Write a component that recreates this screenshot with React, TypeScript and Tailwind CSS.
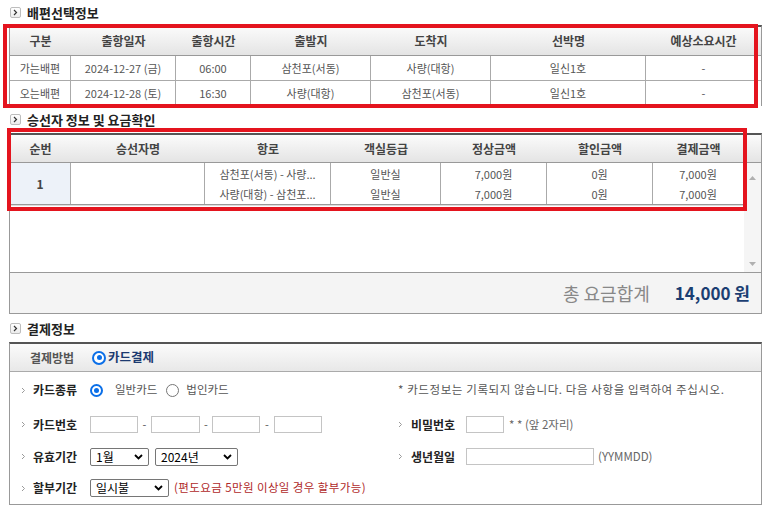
import React from "react";

function Title({ text, h }: { text: string; h: string }) {
  return (
    <div className={`flex items-center pl-[10px] gap-[6px] ${h}`}>
      <span className="w-[11px] h-[11px] border border-[#bdbdbd] rounded-[2px] bg-linear-to-b from-white to-[#ececec] flex items-center justify-center">
        <svg width="5" height="7" viewBox="0 0 5 7">
          <path d="M1 1l2.5 2.5L1 6" stroke="#333" strokeWidth="1.2" fill="none" />
        </svg>
      </span>
      <span className="text-[13px] font-bold text-[#222] leading-none">{text}</span>
    </div>
  );
}

function Bullet() {
  return (
    <svg width="5" height="7" viewBox="0 0 5 7" className="shrink-0">
      <path d="M1 1l2.5 2.5L1 6" stroke="#9a9a9a" strokeWidth="1" fill="none" />
    </svg>
  );
}

function RadioOn({ size = "w-[13px] h-[13px]" }: { size?: string }) {
  return (
    <span className={`${size} rounded-full border-[2px] border-[#0b6fe8] bg-white flex items-center justify-center shrink-0`}>
      <span className="w-[5px] h-[5px] rounded-full bg-[#0b6fe8]" />
    </span>
  );
}

function RadioOff() {
  return <span className="block w-[13px] h-[13px] rounded-full border border-[#767676] bg-white shrink-0" />;
}

function Select({ w, text }: { w: string; text: string }) {
  return (
    <div className={`${w} h-[18px] border border-[#767676] rounded-[2px] bg-white flex items-center justify-between pl-[5px] pr-[5px] text-[12px] text-black`}>
      <span className="leading-none">{text}</span>
      <svg width="9" height="6" viewBox="0 0 9 6">
        <path d="M1 1l3.5 3.5L8 1" stroke="#000" strokeWidth="1.8" fill="none" />
      </svg>
    </div>
  );
}

function Input({ w }: { w: string }) {
  return <div className={`${w} h-[17px] border border-[#c4c4c4] bg-white`} />;
}

const t1Cols = ["w-[61px]", "w-[105px]", "w-[75px]", "w-[120px]", "w-[120px]", "w-[155px]", "w-[115px]"];
const t1Head = ["구분", "출항일자", "출항시간", "출발지", "도착지", "선박명", "예상소요시간"];
const t1Rows = [
  ["가는배편", "2024-12-27 (금)", "06:00", "삼천포(서동)", "사량(대항)", "일신1호", "-"],
  ["오는배편", "2024-12-28 (토)", "16:30", "사량(대항)", "삼천포(서동)", "일신1호", "-"],
];

const t2Cols = ["w-[61px]", "w-[134px]", "w-[126px]", "w-[110px]", "w-[106px]", "w-[106px]", "w-[91px]"];
const t2Head = ["순번", "승선자명", "항로", "객실등급", "정상금액", "할인금액", "결제금액"];

export default function App() {
  return (
    <div className="relative w-[770px] h-[513px] bg-white overflow-hidden font-['Noto_Sans_CJK_KR',sans-serif] text-[#555]">
      <Title text="배편선택정보" h="h-[25px]" />
      {/* Section 1 */}
      <div className="ml-[9px] w-[753px] border-x border-[#999] border-t-2 border-t-[#555]">
        <div className="flex h-[29px] bg-linear-to-b from-[#fbfbfb] to-[#e4e4e4] border-b border-[#999]">
          {t1Head.map((h, i) => (
            <div key={i} className={`${t1Cols[i]} flex items-center justify-center text-[12px] font-bold text-[#444]`}>
              {h}
            </div>
          ))}
        </div>
        {t1Rows.map((r, ri) => (
          <div key={ri} className={`flex h-[25px] ${ri === 0 ? "border-b border-[#aaa]" : ""}`}>
            {r.map((c, i) => (
              <div
                key={i}
                className={`${t1Cols[i]} flex items-center justify-center text-[11px] text-[#555] ${i < 6 ? "border-r border-[#aaa]" : ""}`}
              >
                {c}
              </div>
            ))}
          </div>
        ))}
      </div>

      <Title text="승선자 정보 및 요금확인" h="h-[27px]" />
      {/* Section 2 */}
      <div className="ml-[9px] w-[753px] border-x border-[#999] border-t-2 border-t-[#555]">
        <div className="flex h-[28px] bg-linear-to-b from-[#fbfbfb] to-[#e4e4e4] border-b border-[#999]">
          {t2Head.map((h, i) => (
            <div key={i} className={`${t2Cols[i]} flex items-center justify-center text-[12px] font-bold text-[#444]`}>
              {h}
            </div>
          ))}
        </div>
        <div className="flex h-[109px]">
          <div className="w-[734px] flex flex-col">
            <div className="flex h-[42px] border-b border-[#999] shadow-[0_1px_0_#dcdcdc]">
              <div className="w-[61px] border-r border-[#aaa] bg-[#edf2f9] flex items-center justify-center text-[12px] font-bold text-[#444]">
                1
              </div>
              <div className="w-[134px] border-r border-[#aaa]" />
              <div className="w-[126px] border-r border-[#aaa] flex flex-col items-center justify-center text-[11px] leading-[20px]">
                <span>삼천포(서동) - 사량...</span>
                <span>사량(대항) - 삼천포...</span>
              </div>
              {[
                ["일반실", "일반실"],
                ["7,000원", "7,000원"],
                ["0원", "0원"],
                ["7,000원", "7,000원"],
              ].map((pair, i) => (
                <div
                  key={i}
                  className={`${t2Cols[i + 3]} border-r border-[#aaa] flex flex-col items-center justify-center text-[11px] leading-[20px]`}
                >
                  <span>{pair[0]}</span>
                  <span>{pair[1]}</span>
                </div>
              ))}
            </div>
          </div>
          <div className="w-[17px] bg-[#f5f5f5] flex flex-col items-center justify-between pt-[13px] pb-[6px]">
            <svg width="7" height="4" viewBox="0 0 7 4">
              <path d="M0 4L3.5 0L7 4Z" fill="#b0b0b0" />
            </svg>
            <svg width="7" height="4" viewBox="0 0 7 4">
              <path d="M0 0L3.5 4L7 0Z" fill="#b0b0b0" />
            </svg>
          </div>
        </div>
        <div className="flex h-[42px] items-center justify-end pr-[11px] bg-[#f4f4f4] border-y border-[#999]">
          <span className="text-[18px] text-[#888] mr-[25px]">총 요금합계</span>
          <span className="text-[17px] font-bold text-[#1b3e72]">14,000 원</span>
        </div>
      </div>

      <Title text="결제정보" h="h-[28px]" />
      {/* Section 3 */}
      <div className="ml-[9px] w-[753px] border-x border-b border-[#999] border-t-2 border-t-[#555]">
        <div className="flex items-center h-[28px] pl-[20px] bg-linear-to-b from-[#fbfbfb] to-[#e8e8e8] border-b border-[#aaa]">
          <span className="text-[12px] font-bold text-[#555] w-[62px]">결제방법</span>
          <RadioOn size="w-[14px] h-[14px]" />
          <span className="ml-[2px] text-[12.5px] font-bold text-[#1c3a70]">카드결제</span>
        </div>
        <div className="flex flex-col">
          <div className="flex h-[36px] items-center">
            <div className="w-[388px] flex items-center pl-[11px]">
              <Bullet />
              <span className="ml-[7px] w-[57px] text-[12px] font-bold text-[#222]">카드종류</span>
              <RadioOn />
              <span className="ml-[12px] text-[11.5px] text-[#555]">일반카드</span>
              <span className="ml-[9px]">
                <RadioOff />
              </span>
              <span className="ml-[7px] text-[11.5px] text-[#555]">법인카드</span>
            </div>
            <div className="flex-1 text-[11.5px] tracking-[0.6px] text-[#555]">* 카드정보는 기록되지 않습니다. 다음 사항을 입력하여 주십시오.</div>
          </div>
          <div className="flex h-[33px] items-center">
            <div className="w-[388px] flex items-center pl-[11px]">
              <Bullet />
              <span className="ml-[7px] w-[57px] text-[12px] font-bold text-[#222]">카드번호</span>
              <Input w="w-[48px]" />
              <span className="w-[13px] text-center text-[11px]">-</span>
              <Input w="w-[49px]" />
              <span className="w-[12px] text-center text-[11px]">-</span>
              <Input w="w-[48px]" />
              <span className="w-[14px] text-center text-[11px]">-</span>
              <Input w="w-[48px]" />
            </div>
            <div className="flex-1 flex items-center">
              <Bullet />
              <span className="ml-[8px] w-[55px] text-[12px] font-bold text-[#222]">비밀번호</span>
              <Input w="w-[38px]" />
              <span className="ml-[5px] text-[11.5px] text-[#666]">* * (앞 2자리)</span>
            </div>
          </div>
          <div className="flex h-[31px] items-center">
            <div className="w-[388px] flex items-center pl-[11px]">
              <Bullet />
              <span className="ml-[7px] w-[57px] text-[12px] font-bold text-[#222]">유효기간</span>
              <Select w="w-[59px]" text="1월" />
              <span className="w-[6px]" />
              <Select w="w-[83px]" text="2024년" />
            </div>
            <div className="flex-1 flex items-center">
              <Bullet />
              <span className="ml-[8px] w-[55px] text-[12px] font-bold text-[#222]">생년월일</span>
              <Input w="w-[128px]" />
              <span className="ml-[4px] text-[11.5px] text-[#666]">(YYMMDD)</span>
            </div>
          </div>
          <div className="flex h-[32px] items-center">
            <div className="flex items-center pl-[11px]">
              <Bullet />
              <span className="ml-[7px] w-[57px] text-[12px] font-bold text-[#222]">할부기간</span>
              <Select w="w-[79px]" text="일시불" />
              <span className="ml-[5px] text-[11.5px] tracking-[0.4px] text-[#b02a2a]">(편도요금 5만원 이상일 경우 할부가능)</span>
            </div>
          </div>
        </div>
      </div>

      {/* annotation overlays */}
      <div className="absolute left-[3px] top-[24px] w-[755px] h-[84px] border-[4px] border-[#e4141e] pointer-events-none" />
      <div className="absolute left-[7px] top-[128px] w-[740px] h-[83px] border-[4px] border-[#e4141e] pointer-events-none" />
    </div>
  );
}
